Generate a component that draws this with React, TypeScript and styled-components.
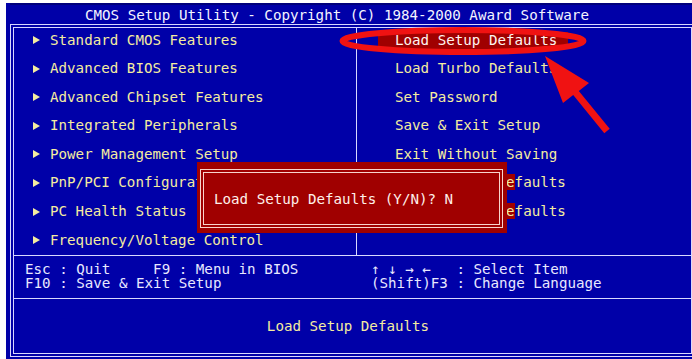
import styled, { createGlobalStyle } from "styled-components";

type MenuEntry = {
  label: string;
  selected?: boolean;
  shadowAt?: number;
};

const leftMenu: MenuEntry[] = [
  { label: "Standard CMOS Features" },
  { label: "Advanced BIOS Features" },
  { label: "Advanced Chipset Features" },
  { label: "Integrated Peripherals" },
  { label: "Power Management Setup" },
  { label: "PnP/PCI Configurations" },
  { label: "PC Health Status" },
  { label: "Frequency/Voltage Control" },
];

const rightMenu: MenuEntry[] = [
  { label: "Load Setup Defaults", selected: true },
  { label: "Load Turbo Defaults" },
  { label: "Set Password" },
  { label: "Save & Exit Setup" },
  { label: "Exit Without Saving" },
  { label: "Load Safety Defaults", shadowAt: 13 },
  { label: "Load Normal Defaults", shadowAt: 13 },
];

const renderLabel = ({ label, shadowAt }: MenuEntry) => {
  if (shadowAt === undefined) return label;
  return (
    <>
      {label.slice(0, shadowAt)}
      <ShadowCell>{label[shadowAt]}</ShadowCell>
      {label.slice(shadowAt + 1)}
    </>
  );
};

const App = () => {
  return (
    <>
      <GlobalStyle />
      <Page>
        <Screen>
          <TitleBar>CMOS Setup Utility - Copyright (C) 1984-2000 Award Software</TitleBar>
          <Frame>
            <MenuSection>
              <MenuColumn>
                {leftMenu.map((item) => (
                  <LeftItem key={item.label}>
                    <Pointer />
                    {item.label}
                  </LeftItem>
                ))}
              </MenuColumn>
              <RightColumn>
                {rightMenu.map((item) => (
                  <RightItem key={item.label} $selected={item.selected}>
                    {renderLabel(item)}
                  </RightItem>
                ))}
              </RightColumn>
            </MenuSection>
            <HelpSection>
              <HelpLeft>
                {"Esc : Quit     F9 : Menu in BIOS\nF10 : Save & Exit Setup"}
              </HelpLeft>
              <HelpRight>
                {"↑ ↓ → ←   : Select Item\n(Shift)F3 : Change Language"}
              </HelpRight>
            </HelpSection>
            <StatusBar>Load Setup Defaults</StatusBar>
          </Frame>
        </Screen>

        <Dialog>
          <DialogFrame>Load Setup Defaults (Y/N)? N</DialogFrame>
        </Dialog>

        <Annotation viewBox="0 0 692 359">
          <ellipse
            cx="463"
            cy="41"
            rx="120.5"
            ry="11"
            fill="none"
            stroke="#f01212"
            strokeWidth="6"
          />
          <path
            d="M545 56 L589 83 L578.8 90.9 L609.7 128.8 L604.3 133.2 L573.2 95.1 L563 103 Z"
            fill="#f01212"
          />
        </Annotation>
      </Page>
    </>
  );
};

const GlobalStyle = createGlobalStyle`
  html, body {
    margin: 0;
    padding: 0;
    background: #ffffff;
    overflow: hidden;
  }
`;

const Page = styled.div`
  position: relative;
  width: 692px;
  height: 359px;
  overflow: hidden;
  box-sizing: border-box;
  padding: 3px 0 0 6px;
  background: #ffffff;
  font-family: "DejaVu Sans Mono", "Liberation Mono", monospace;
  font-size: 14.2px;
`;

const Screen = styled.div`
  width: 692px;
  height: 356px;
  box-sizing: border-box;
  padding-left: 4px;
  background: #0000a8;
  display: flex;
  flex-direction: column;
`;

const TitleBar = styled.div`
  height: 21px;
  box-sizing: border-box;
  border-top: 2px solid #00007c;
  padding-left: 75px;
  display: flex;
  align-items: center;
  color: #f4f4ff;
  white-space: pre;
`;

const Frame = styled.div`
  width: 685px;
  height: 333px;
  box-sizing: border-box;
  border: 4px double #d8d8ff;
  display: flex;
  flex-direction: column;
`;

const MenuSection = styled.div`
  height: 227px;
  display: grid;
  grid-template-columns: 342px 1fr;
`;

const MenuColumn = styled.div`
  display: flex;
  flex-direction: column;
  gap: 11.6px;
  padding-top: 3.5px;
`;

const RightColumn = styled(MenuColumn)`
  border-left: 1px solid #d8d8ff;
`;

const LeftItem = styled.div`
  display: flex;
  align-items: center;
  height: 17px;
  line-height: 17px;
  padding-left: 19px;
  color: #f4eca0;
  white-space: pre;
`;

const Pointer = styled.span`
  width: 0;
  height: 0;
  border-left: 7px solid #f4eca0;
  border-top: 4px solid transparent;
  border-bottom: 4px solid transparent;
  margin-right: 10px;
`;

const RightItem = styled.div<{ $selected?: boolean }>`
  width: 190px;
  height: 17px;
  line-height: 17px;
  margin-left: 21px;
  padding-left: 17px;
  box-sizing: border-box;
  white-space: pre;
  color: ${(p) => (p.$selected ? "#fff4f0" : "#f4eca0")};
  background: ${(p) => (p.$selected ? "#a00000" : "transparent")};
`;

const ShadowCell = styled.span`
  background: #a00000;
`;

const HelpSection = styled.div`
  height: 44px;
  box-sizing: border-box;
  border-top: 1px solid #d8d8ff;
  border-bottom: 1px solid #d8d8ff;
  display: grid;
  grid-template-columns: 342px 1fr;
  padding-top: 6px;
  color: #e8e8ff;
  line-height: 14px;
  white-space: pre;
`;

const HelpLeft = styled.div`
  padding-left: 11px;
`;

const HelpRight = styled.div`
  padding-left: 15px;
`;

const StatusBar = styled.div`
  flex: 1;
  display: flex;
  align-items: center;
  justify-content: center;
  padding-right: 9px;
  color: #f4eca0;
`;

const Dialog = styled.div`
  position: absolute;
  left: 197px;
  top: 162px;
  width: 310px;
  height: 71px;
  box-sizing: border-box;
  padding: 7px 4px 5px 3px;
  background: #a00000;
`;

const DialogFrame = styled.div`
  height: 100%;
  box-sizing: border-box;
  border: 4px double #f8d4cc;
  padding-left: 10px;
  display: flex;
  align-items: center;
  color: #fff0ea;
  white-space: pre;
`;

const Annotation = styled.svg`
  position: absolute;
  left: 0;
  top: 0;
  width: 692px;
  height: 359px;
  pointer-events: none;
`;

export default App;
